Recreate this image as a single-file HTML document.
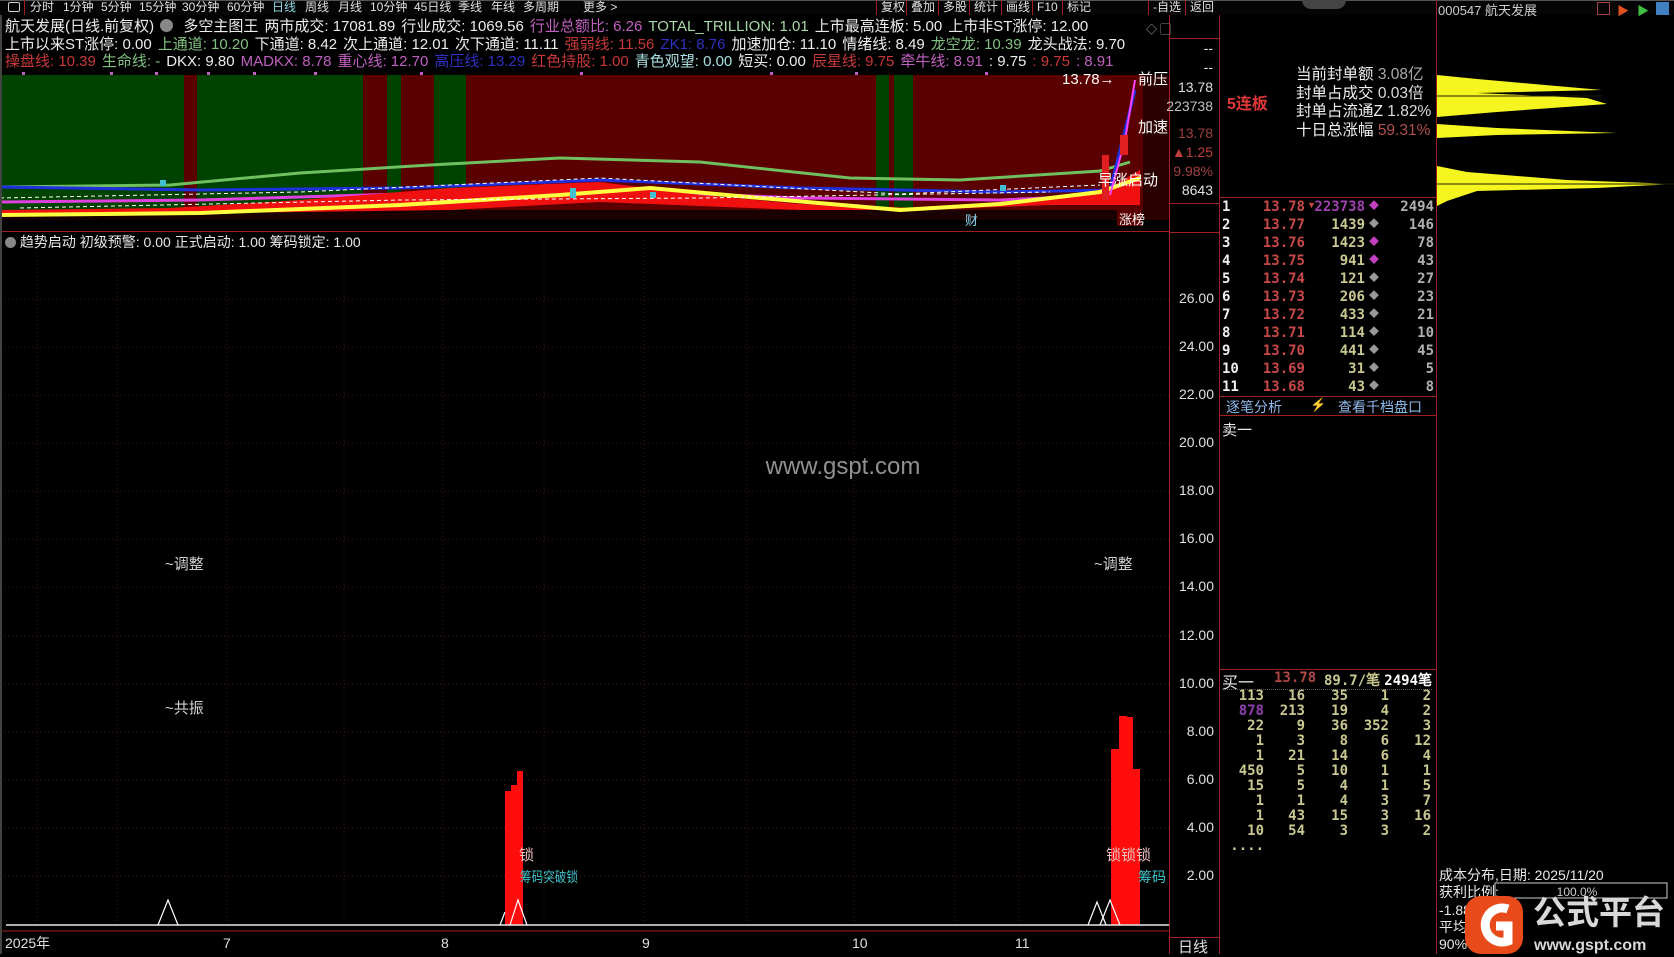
<!DOCTYPE html>
<html><head><meta charset="utf-8"><style>
*{margin:0;padding:0;box-sizing:border-box}
body{width:1674px;height:954px;background:#000;position:relative;overflow:hidden;font-family:"Liberation Sans","Noto Sans CJK SC",sans-serif;color:#e8e8e8}
.a{position:absolute;white-space:nowrap}
.tb{font-size:12px;top:0;line-height:15px;color:#e0e0e0}
.ln{position:absolute;left:5px;font-size:15px;line-height:17px;white-space:nowrap}
.ln span{margin-right:6px}
.w{color:#ececec}.g{color:#80c080}.p{color:#c060c0}.r{color:#c83838}.b{color:#3030c0}.c{color:#a8e0e0}.lg{color:#a8d8a8}
.ax{font-size:14px;color:#e0e0e0;right:461px;text-align:right}
.ob{font-size:14px;font-weight:bold;font-family:"DejaVu Sans Mono","Liberation Mono",monospace}
.bid{font-size:14px;font-weight:bold;color:#c8c890;font-family:"DejaVu Sans Mono","Liberation Mono",monospace}
</style></head><body>
<!-- toolbar -->
<div class="a" style="left:0;top:0;width:1674px;height:15px;background:#050505;border-top:1px solid #555"></div>
<div class="a" style="left:8px;top:2px;width:12px;height:10px;border:1px solid #ccc;border-radius:2px"></div>
<div class="a" style="left:24px;top:0;width:1px;height:15px;background:#a02020"></div>
<div class="a tb" style="left:30px">分时</div><div class="a tb" style="left:63px">1分钟</div><div class="a tb" style="left:101px">5分钟</div><div class="a tb" style="left:139px">15分钟</div><div class="a tb" style="left:182px">30分钟</div><div class="a tb" style="left:227px">60分钟</div><div class="a tb" style="left:272px;color:#8fd8e8">日线</div><div class="a tb" style="left:305px">周线</div><div class="a tb" style="left:338px">月线</div><div class="a tb" style="left:370px">10分钟</div><div class="a tb" style="left:414px">45日线</div><div class="a tb" style="left:458px">季线</div><div class="a tb" style="left:491px">年线</div><div class="a tb" style="left:523px">多周期</div><div class="a tb" style="left:583px">更多 &gt;</div>
<div class="a tb" style="left:876px;border-left:1px solid #a02020;padding-left:4px">复权</div><div class="a tb" style="left:906px;border-left:1px solid #a02020;padding-left:4px">叠加</div><div class="a tb" style="left:938px;border-left:1px solid #a02020;padding-left:4px">多股</div><div class="a tb" style="left:969px;border-left:1px solid #a02020;padding-left:4px">统计</div><div class="a tb" style="left:1001px;border-left:1px solid #a02020;padding-left:4px">画线</div><div class="a tb" style="left:1032px;border-left:1px solid #a02020;padding-left:4px">F10</div><div class="a tb" style="left:1062px;border-left:1px solid #a02020;padding-left:4px">标记</div><div class="a tb" style="left:1148px;border-left:1px solid #a02020;padding-left:4px">-自选</div><div class="a tb" style="left:1185px;border-left:1px solid #a02020;padding-left:4px">返回</div>
<div class="a" style="left:1302px;top:0;width:44px;height:9px;background:#444;border-radius:0 0 10px 10px"></div>
<div class="a" style="left:1438px;top:0;font-size:13px;color:#ccc">000547 航天发展</div>
<div class="a" style="left:1597px;top:2px;width:13px;height:13px;border:1px solid #a04040"></div>
<div class="a" style="left:1617px;top:2px;color:#e05020;font-size:12px">▶</div>
<div class="a" style="left:1637px;top:2px;color:#40c040;font-size:12px">▶</div>
<div class="a" style="left:1656px;top:2px;width:13px;height:13px;background:#4080c0"></div>

<!-- info lines -->
<div class="ln" style="top:18px"><span class="w">航天发展(日线.前复权)</span><span style="display:inline-block;width:13px;height:13px;border-radius:50%;background:#888;vertical-align:-1px"></span> <span class="w">多空主图王</span><span class="w">两市成交: 17081.89</span><span class="w">行业成交: 1069.56</span><span class="p">行业总额比: 6.26</span><span class="lg">TOTAL_TRILLION: 1.01</span><span class="w">上市最高连板: 5.00</span><span class="w">上市非ST涨停: 12.00</span></div>
<div class="ln" style="top:36px"><span class="w">上市以来ST涨停: 0.00</span><span class="g">上通道: 10.20</span><span class="w">下通道: 8.42</span><span class="w">次上通道: 12.01</span><span class="w">次下通道: 11.11</span><span class="r">强弱线: 11.56</span><span class="b">ZK1: 8.76</span><span class="w">加速加仓: 11.10</span><span class="w">情绪线: 8.49</span><span class="g">龙空龙: 10.39</span><span class="w">龙头战法: 9.70</span></div>
<div class="ln" style="top:53px"><span class="r">操盘线: 10.39</span><span class="g">生命线: -</span><span class="w">DKX: 9.80</span><span class="p">MADKX: 8.78</span><span class="p">重心线: 12.70</span><span class="b">高压线: 13.29</span><span class="r">红色持股: 1.00</span><span class="c">青色观望: 0.00</span><span class="w">短买: 0.00</span><span class="r">辰星线: 9.75</span><span class="p">牵牛线: 8.91</span><span class="w">: 9.75</span><span class="r">: 9.75</span><span class="p">: 8.91</span></div>

<!-- upper chart -->
<svg class="a" style="left:0;top:70px" width="1169" height="165">
<g fill="#c060c0"><rect x="22" y="2" width="3" height="3"/><rect x="110" y="2" width="3" height="3"/><rect x="155" y="2" width="3" height="3"/><rect x="207" y="2" width="3" height="3"/><rect x="253" y="2" width="3" height="3"/><rect x="314" y="2" width="3" height="3"/><rect x="420" y="2" width="3" height="3"/><rect x="580" y="2" width="3" height="3"/><rect x="770" y="2" width="3" height="3"/><rect x="855" y="2" width="3" height="3"/><rect x="985" y="2" width="3" height="3"/></g>
<rect x="0" y="5" width="1143" height="145" fill="#5a0000"/>
<g fill="#004200"><rect x="0" y="5" width="184" height="145"/><rect x="197" y="5" width="166" height="145"/><rect x="387" y="5" width="14" height="145"/><rect x="434" y="5" width="32" height="145"/><rect x="876" y="5" width="13" height="145"/><rect x="894" y="5" width="19" height="145"/></g>
<rect x="1143" y="5" width="26" height="145" fill="#2a0000"/>
<rect x="0" y="140" width="1143" height="10" fill="#1a0000"/>
<path d="M0,117 L170,115 L300,103 L430,95 L560,88 L700,92 L850,108 L960,110 L1100,101 L1130,92" stroke="#70c060" stroke-width="3" fill="none"/>
<path d="M0,117 L200,120 L400,118 L600,110 L800,118 L1000,122 L1110,120 L1135,20" stroke="#2030e0" stroke-width="3" fill="none"/>
<path d="M0,132 L200,130 L400,124 L600,120 L800,128 L1000,130 L1110,125" stroke="#e040e0" stroke-width="3" fill="none"/>
<path d="M0,140 L170,138 L300,130 L450,118 L600,112 L700,125 L800,134 L920,138 L1050,128 L1110,118 L1140,100 L1140,135 L1050,135 L920,140 L800,140 L600,132 L450,140 L300,142 L0,146 Z" fill="#f01010"/>
<path d="M0,145 L200,143 L400,135 L560,125 L650,118 L760,128 L900,140 L1000,134 L1100,122 L1140,108" stroke="#ffff40" stroke-width="4" fill="none"/>
<g stroke="#ffffff" stroke-dasharray="4,3" stroke-width="1" fill="none"><path d="M0,128 L300,122 L600,108 L900,124 L1100,115"/><path d="M20,138 L400,130 L700,128 L1050,122"/></g>
<path d="M1110,125 L1125,70 L1135,10" stroke="#ff40ff" stroke-width="2" fill="none"/>
<rect x="1120" y="65" width="8" height="20" fill="#e02020"/><rect x="1102" y="85" width="7" height="45" fill="#e02020"/>
<g fill="#40c0d0"><rect x="160" y="110" width="6" height="6"/><rect x="570" y="118" width="6" height="10"/><rect x="650" y="122" width="6" height="6"/><rect x="1000" y="115" width="6" height="6"/></g>
<text x="1062" y="14" fill="#fff" font-size="15">13.78→</text>
<text x="1138" y="14" fill="#fff" font-size="15">前压</text>
<text x="1138" y="62" fill="#fff" font-size="15">加速</text>
<text x="1098" y="115" fill="#fff" font-size="15">早涨启动</text>
<text x="965" y="155" fill="#8fd8f0" font-size="13">财</text>
<rect x="1117" y="140" width="25" height="16" fill="#5a0000"/><text x="1119" y="154" fill="#fff" font-size="13">涨榜</text>
</svg>
<div class="a" style="left:0;top:231px;width:1169px;height:1px;background:#a02020"></div>
<div class="a" style="left:5px;top:232px;font-size:14px;color:#e8e8e8"><span style="display:inline-block;width:11px;height:11px;border-radius:50%;background:#888;vertical-align:-1px"></span> 趋势启动 初级预警: 0.00 正式启动: 1.00 筹码锁定: 1.00</div>

<!-- lower chart -->
<svg class="a" style="left:0;top:0" width="1169" height="954">
<g stroke="#4a1818" stroke-dasharray="1,3" stroke-width="1">
<line x1="0" y1="299" x2="1169" y2="299"/><line x1="0" y1="347" x2="1169" y2="347"/><line x1="0" y1="395" x2="1169" y2="395"/><line x1="0" y1="443" x2="1169" y2="443"/><line x1="0" y1="491" x2="1169" y2="491"/><line x1="0" y1="539" x2="1169" y2="539"/><line x1="0" y1="587" x2="1169" y2="587"/><line x1="0" y1="636" x2="1169" y2="636"/><line x1="0" y1="684" x2="1169" y2="684"/><line x1="0" y1="732" x2="1169" y2="732"/><line x1="0" y1="780" x2="1169" y2="780"/><line x1="0" y1="828" x2="1169" y2="828"/><line x1="0" y1="876" x2="1169" y2="876"/>
<line x1="37" y1="240" x2="37" y2="925"/><line x1="117" y1="240" x2="117" y2="925"/><line x1="227" y1="240" x2="227" y2="925"/><line x1="344" y1="240" x2="344" y2="925"/><line x1="443" y1="240" x2="443" y2="925"/><line x1="544" y1="240" x2="544" y2="925"/><line x1="644" y1="240" x2="644" y2="925"/><line x1="747" y1="240" x2="747" y2="925"/><line x1="854" y1="240" x2="854" y2="925"/><line x1="955" y1="240" x2="955" y2="925"/><line x1="1019" y1="240" x2="1019" y2="925"/>
</g>
<g fill="#ff0c0c"><rect x="505" y="791" width="6" height="134"/><rect x="511" y="785" width="6" height="140"/><rect x="517" y="771" width="6" height="154"/>
<rect x="1111" y="749" width="8" height="176"/><rect x="1119" y="716" width="8" height="209"/><rect x="1127" y="717" width="6" height="208"/><rect x="1133" y="769" width="7" height="156"/></g>
<line x1="6" y1="925" x2="1169" y2="925" stroke="#e8e8e8" stroke-width="1.5"/>
<g stroke="#fff" fill="none" stroke-width="1.2"><path d="M158,925 L168,900 L178,925"/><path d="M500,925 L505,912"/><path d="M510,925 L518,900 L527,925"/><path d="M1088,925 L1097,902 L1106,925"/><path d="M1100,925 L1110,900 L1120,925"/></g>
<line x1="0" y1="931" x2="1169" y2="931" stroke="#a02020"/>
<text x="843" y="474" fill="#909090" font-size="24" text-anchor="middle">www.gspt.com</text>
<text x="165" y="569" fill="#d0d0d0" font-size="15">~调整</text>
<text x="165" y="713" fill="#d0d0d0" font-size="15">~共振</text>
<text x="1094" y="569" fill="#d0d0d0" font-size="15">~调整</text>
<text x="519" y="860" fill="#f0c0c0" font-size="15">锁</text>
<text x="520" y="882" fill="#40c0c8" font-size="14" textLength="58" lengthAdjust="spacingAndGlyphs">筹码突破锁</text>
<text x="1106" y="860" fill="#f0c0c0" font-size="15">锁锁锁</text>
<text x="1138" y="882" fill="#40c0c8" font-size="14">筹码</text>
<g fill="#e0e0e0" font-size="14"><text x="5" y="948">2025年</text><text x="223" y="948">7</text><text x="441" y="948">8</text><text x="642" y="948">9</text><text x="852" y="948">10</text><text x="1015" y="948">11</text></g>
<rect x="0" y="15" width="2" height="939" fill="#444"/>
</svg>

<!-- price axis column -->
<div class="a" style="left:1169px;top:15px;width:1px;height:939px;background:#a02020"></div>
<div class="a" style="left:1219px;top:15px;width:1px;height:939px;background:#a02020"></div>
<div class="a" style="left:1169px;top:38px;width:50px;height:1px;background:#a02020"></div>
<div class="a" style="left:1169px;top:203px;width:50px;height:1px;background:#a02020"></div>
<div class="a" style="left:1169px;top:232px;width:50px;height:1px;background:#a02020"></div>
<div class="a" style="left:1169px;top:937px;width:50px;height:1px;background:#a02020"></div>
<div class="a" style="left:1146px;top:21px;font-size:11px;color:#aaa">◇ ▢</div>
<div class="a ax" style="top:40px">--</div><div class="a ax" style="top:59px">--</div>
<div class="a ax" style="top:79px">13.78</div><div class="a ax" style="top:98px;color:#c0c0c0">223738</div>
<div class="a ax" style="top:125px;color:#a04040">13.78</div><div class="a ax" style="top:144px;color:#c04040">▲1.25</div><div class="a ax" style="top:163px;color:#a04040">9.98%</div><div class="a ax" style="top:182px">8643</div>
<div class="a ax" style="top:290px;right:460px">26.00</div><div class="a ax" style="top:338px;right:460px">24.00</div><div class="a ax" style="top:386px;right:460px">22.00</div><div class="a ax" style="top:434px;right:460px">20.00</div><div class="a ax" style="top:482px;right:460px">18.00</div><div class="a ax" style="top:530px;right:460px">16.00</div><div class="a ax" style="top:578px;right:460px">14.00</div><div class="a ax" style="top:627px;right:460px">12.00</div><div class="a ax" style="top:675px;right:460px">10.00</div><div class="a ax" style="top:723px;right:460px">8.00</div><div class="a ax" style="top:771px;right:460px">6.00</div><div class="a ax" style="top:819px;right:460px">4.00</div><div class="a ax" style="top:867px;right:460px">2.00</div>
<div class="a" style="left:1178px;top:936px;font-size:15px;color:#e0e0e0">日线</div>

<!-- order panel -->
<div class="a" style="left:1436px;top:0;width:1px;height:954px;background:#a02020"></div>
<div class="a" style="left:1227px;top:90px;font-size:16px;font-weight:bold;color:#e03838">5连板</div>
<div class="a" style="left:1296px;top:66px;font-size:15.5px;line-height:18.5px;color:#f0f0f0">当前封单额 <span style="color:#aaa">3.08亿</span><br>封单占成交 <span style="color:#ddd">0.03倍</span><br>封单占流通Z <span style="color:#ddd">1.82%</span><br>十日总涨幅 <span style="color:#b05050">59.31%</span></div>
<div class="a" style="left:1219px;top:197px;width:217px;height:1px;background:#a02020"></div>
<div class="a ob" style="left:1222px;top:198px;line-height:18px;color:#f0f0f0">1<br>2<br>3<br>4<br>5<br>6<br>7<br>8<br>9<br>10<br>11</div>
<div class="a ob" style="left:1258px;width:47px;text-align:right;top:198px;line-height:18px;color:#c84848">13.78<br>13.77<br>13.76<br>13.75<br>13.74<br>13.73<br>13.72<br>13.71<br>13.70<br>13.69<br>13.68</div>
<div class="a" style="left:1307px;top:200px;font-size:9px;color:#c84848">▼</div>
<div class="a ob" style="left:1305px;width:60px;text-align:right;top:198px;line-height:18px;color:#c8c890"><span style="color:#a040b0">223738</span><br>1439<br>1423<br>941<br>121<br>206<br>433<br>114<br>441<br>31<br>43</div>
<div class="a" style="left:1369px;top:198px;line-height:18px;font-size:10px;color:#999"><span style="color:#c040c0">◆</span><br>◆<br><span style="color:#c040c0">◆</span><br><span style="color:#c040c0">◆</span><br>◆<br>◆<br>◆<br>◆<br>◆<br>◆<br>◆</div>
<div class="a ob" style="left:1384px;width:50px;text-align:right;top:198px;line-height:18px;color:#b0b0b0">2494<br>146<br>78<br>43<br>27<br>23<br>21<br>10<br>45<br>5<br>8</div>
<div class="a" style="left:1219px;top:396px;width:217px;height:1px;background:#a02020"></div>
<div class="a" style="left:1226px;top:397px;font-size:14px;color:#8fb8e8">逐笔分析</div>
<div class="a" style="left:1310px;top:397px;font-size:13px;color:#f0c020">⚡</div>
<div class="a" style="left:1338px;top:397px;font-size:14px;color:#8fb8e8">查看千档盘口</div>
<div class="a" style="left:1219px;top:415px;width:217px;height:1px;background:#a02020"></div>
<div class="a" style="left:1222px;top:419px;font-size:15px;color:#e8e8e8">卖一</div>
<div class="a" style="left:1219px;top:669px;width:217px;height:1px;background:#a02020"></div>
<div class="a" style="left:1222px;top:669px;font-size:16px;color:#e8e8e8">买一</div>
<div class="a ob" style="left:1274px;width:40px;text-align:right;top:670px;color:#b04848">13.78</div>
<div class="a ob" style="left:1324px;width:49px;text-align:right;top:670px;color:#c8c890">89.7/笔</div>
<div class="a ob" style="left:1379px;width:53px;text-align:right;top:670px;color:#fff">2494笔</div>
<div class="a" style="left:1222px;top:689px;width:210px;border-top:1px dotted #555"></div>
<div class="a bid" style="left:1224px;width:40px;text-align:right;top:689px;line-height:15px"><span>113</span><br><span style="color:#9040b0">878</span><br>22<br>1<br>1<br>450<br>15<br>1<br>1<br>10<br>....</div>
<div class="a bid" style="left:1265px;width:40px;text-align:right;top:689px;line-height:15px">16<br>213<br>9<br>3<br>21<br>5<br>5<br>1<br>43<br>54</div>
<div class="a bid" style="left:1308px;width:40px;text-align:right;top:689px;line-height:15px">35<br>19<br>36<br>8<br>14<br>10<br>4<br>4<br>15<br>3</div>
<div class="a bid" style="left:1349px;width:40px;text-align:right;top:689px;line-height:15px">1<br>4<br>352<br>6<br>6<br>1<br>1<br>3<br>3<br>3</div>
<div class="a bid" style="left:1391px;width:40px;text-align:right;top:689px;line-height:15px">2<br>2<br>3<br>12<br>4<br>1<br>5<br>7<br>16<br>2</div>

<!-- cost distribution -->
<svg class="a" style="left:1437px;top:0" width="237" height="954">
<g fill="#f5f520">
<path d="M0,75 L40,79 L165,90 L40,93 L150,98 L170,104 L60,112 L0,117 Z"/>
<path d="M0,124 L60,128 L180,133 L60,135 L0,138 Z"/>
<path d="M0,166 L30,172 L130,180 L237,184 L160,188 L40,191 L25,196 L10,201 L0,206 Z"/>
</g>
<g stroke="#202000" stroke-width="1"><line x1="0" y1="96" x2="165" y2="96"/><line x1="0" y1="184" x2="237" y2="184"/></g>
<text x="2" y="880" fill="#e8e8e8" font-size="14">成本分布,日期: 2025/11/20</text>
<text x="2" y="897" fill="#e8e8e8" font-size="14">获利比例:</text>
<rect x="58" y="883" width="172" height="15" fill="none" stroke="#ccc"/>
<text x="140" y="896" fill="#ccc" font-size="12" text-anchor="middle">100.0%</text>
<text x="2" y="915" fill="#e8e8e8" font-size="14">-1.88</text>
<text x="2" y="932" fill="#e8e8e8" font-size="14">平均</text>
<text x="2" y="949" fill="#e8e8e8" font-size="14">90%</text>
<rect x="28" y="896" width="58" height="58" rx="16" fill="#e84a1a"/>
<path d="M71,909 A17,17 0 1 0 71,941 L71,926 L59,926" stroke="#fff" stroke-width="9" fill="none"/>
<text x="96" y="924" fill="#d8d8d8" font-size="33" font-weight="bold">公式平台</text>
<text x="97" y="950" fill="#d8d8d8" font-size="16" font-weight="bold">www.gspt.com</text>
</svg>
</body></html>
